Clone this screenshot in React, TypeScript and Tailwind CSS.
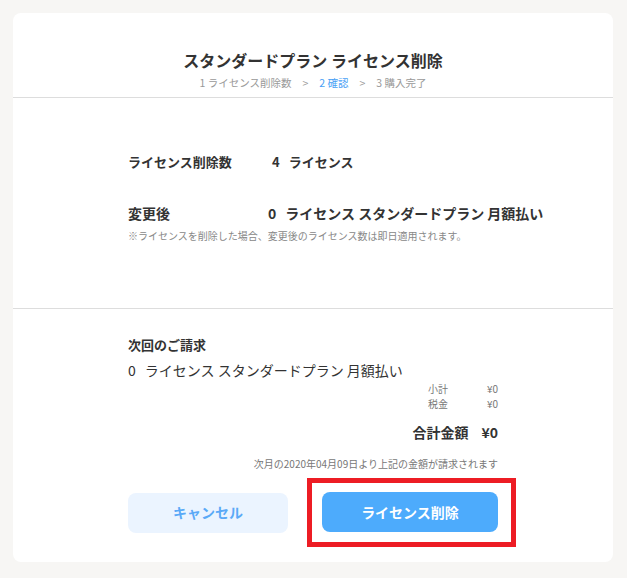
export default function App() {
  const font = { fontFamily: '"Noto Sans CJK JP", "Noto Sans", sans-serif' };

  return (
    <div
      className="min-h-[578px] w-full bg-[#f7f6f4] px-[13px] pt-[13px] pb-[16px] text-[#333333]"
      style={font}
    >
      <div className="w-[600px] rounded-[8px] bg-white pt-[35px] pb-[15px]">
        {/* Header */}
        <div className="text-center">
          <h2 className="text-[16px] font-bold leading-[24px] text-[#333333]">
            スタンダードプラン ライセンス削除
          </h2>
          <div className="mt-[3px] text-[10.5px] leading-[16px] text-[#999999]">
            <span>1 ライセンス削除数</span>
            <span className="mx-[11px]">&gt;</span>
            <span className="text-[#4a9ff5]">2 確認</span>
            <span className="mx-[11px]">&gt;</span>
            <span>3 購入完了</span>
          </div>
        </div>
        <div className="mt-[6px] border-t border-[#dddddd]" />

        {/* Changes */}
        <div className="px-[115px] pt-[54px] pb-[65px]">
          <div className="flex whitespace-nowrap text-[13px] font-bold leading-[20px]">
            <span className="w-[144px] shrink-0">ライセンス削除数</span>
            <span>4</span>
            <span className="ml-[9px]">ライセンス</span>
          </div>
          <div className="mt-[31px] flex whitespace-nowrap text-[14px] font-bold leading-[20px]">
            <span className="w-[140px] shrink-0">変更後</span>
            <span className="shrink-0">0</span>
            <span className="ml-[9px] shrink-0">ライセンス スタンダードプラン 月額払い</span>
          </div>
          <p className="mt-[6px] whitespace-nowrap text-[10px] leading-[14px] text-[#888888]">
            ※ライセンスを削除した場合、変更後のライセンス数は即日適用されます。
          </p>
        </div>
        <div className="border-t border-[#dddddd]" />

        {/* Next billing */}
        <div className="px-[115px] pt-[26px]">
          <h3 className="text-[13px] font-bold leading-[20px]">次回のご請求</h3>
          <div className="mt-[5px] flex whitespace-nowrap text-[14px] leading-[20px]">
            <span>0</span>
            <span className="ml-[9px]">ライセンス スタンダードプラン 月額払い</span>
          </div>
          <div className="mt-[1px] text-[10px] leading-[15px] text-[#777777]">
            <div className="flex justify-end">
              <span>小計</span>
              <span className="w-[50px] text-right">¥0</span>
            </div>
            <div className="flex justify-end">
              <span>税金</span>
              <span className="w-[50px] text-right">¥0</span>
            </div>
          </div>
          <div className="mt-[11px] flex justify-end text-[14px] font-bold leading-[20px]">
            <span>合計金額</span>
            <span className="ml-[13px]">¥0</span>
          </div>
          <p className="mt-[15px] text-right text-[10px] leading-[14px] text-[#777777]">
            次月の2020年04月09日より上記の金額が請求されます
          </p>

          {/* Buttons */}
          <div className="mt-[7px] flex items-center">
            <button
              type="button"
              className="h-[40px] w-[160px] shrink-0 rounded-[8px] bg-[#ebf4ff] text-[14px] font-bold text-[#5aa9f7]"
            >
              キャンセル
            </button>
            <div className="ml-[19px] shrink-0 border-[5px] border-[#ed1c24] pt-[9px] pb-[10px] pl-[10px] pr-[13px]">
              <button
                type="button"
                className="h-[40px] w-[176px] rounded-[8px] bg-[#4dabfc] text-[14px] font-bold text-white"
              >
                ライセンス削除
              </button>
            </div>
          </div>
        </div>
      </div>
    </div>
  );
}
